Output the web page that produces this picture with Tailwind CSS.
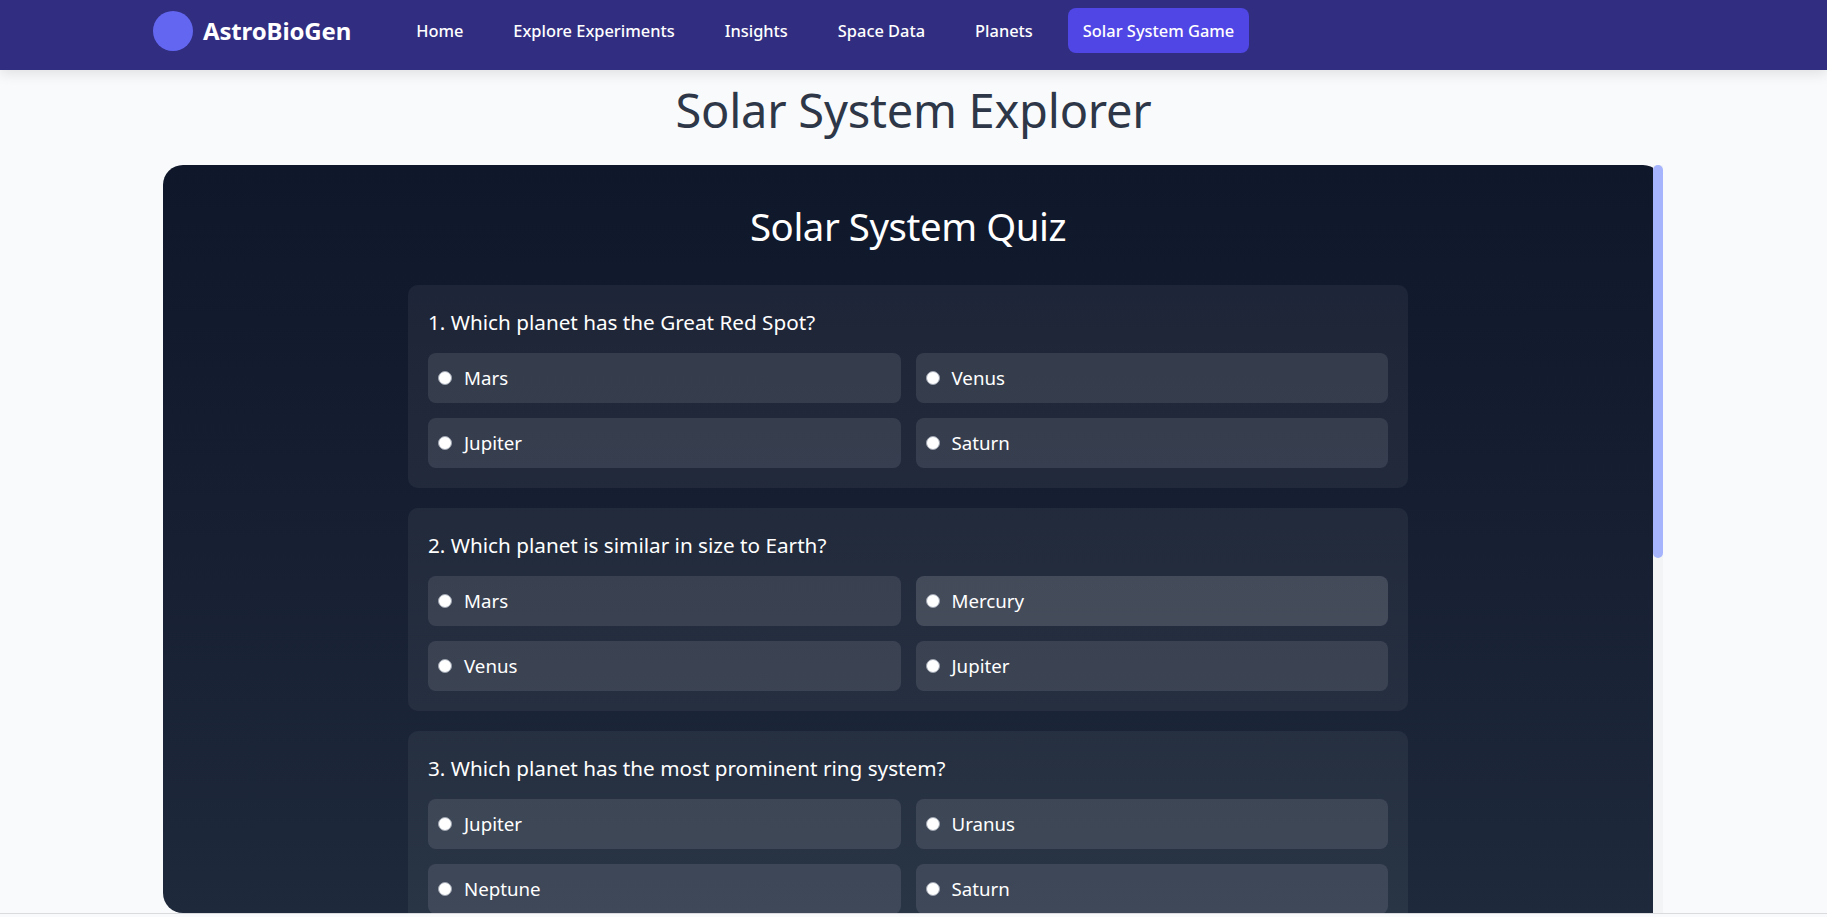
<!doctype html>
<html lang="en">
<head>
<meta charset="utf-8">
<title>Solar System Explorer</title>
<script src="https://cdn.jsdelivr.net/npm/@tailwindcss/browser@4"></script>
</head>
<body class="h-[917px] overflow-hidden bg-[#f9fafb] font-['Noto_Sans',sans-serif]">
<nav class="relative z-10 h-[70px] bg-[#312e81] shadow-[0_4px_12px_rgba(0,0,0,0.1)] pl-[153px] pb-[9px] flex items-center">
  <div class="flex items-center gap-[10px] text-white">
    <span class="w-10 h-10 rounded-full bg-[#6366f1]"></span>
    <span class="text-2xl font-bold tracking-[-0.15px]">AstroBioGen</span>
  </div>
  <ul class="flex items-center gap-5 ml-[50px] text-white text-[16.4px] font-medium">
    <li><a class="block px-[15px] py-[10px] leading-[25px] rounded-lg">Home</a></li>
    <li><a class="block px-[15px] py-[10px] leading-[25px] rounded-lg">Explore Experiments</a></li>
    <li><a class="block px-[15px] py-[10px] leading-[25px] rounded-lg">Insights</a></li>
    <li><a class="block px-[15px] py-[10px] leading-[25px] rounded-lg">Space Data</a></li>
    <li><a class="block px-[15px] py-[10px] leading-[25px] rounded-lg">Planets</a></li>
    <li><a class="block px-[15px] py-[10px] leading-[25px] rounded-lg bg-[#4f46e5]">Solar System Game</a></li>
  </ul>
</nav>
<main class="h-[844px] border-b border-[#d9dbde] flex flex-col items-center">
  <h1 class="h-[95px] pb-[14px] flex items-center justify-center text-[47px] tracking-[-0.24px] text-[#2d3748]">Solar System Explorer</h1>
  <div class="relative w-[1500px] mr-[1px] h-[748px]">
    <section class="h-full overflow-hidden rounded-[20px] rounded-br-none bg-linear-to-b from-[#0f172a] to-[#1e293b] pr-[10px] text-white flex flex-col items-center">
      <h2 class="h-[120px] shrink-0 pt-[4px] flex items-center justify-center text-[38.4px] tracking-[-0.45px]">Solar System Quiz</h2>
      <div class="w-[1000px] flex flex-col gap-5">
        <article class="rounded-[10px] bg-white/5 p-5">
          <h3 class="text-[20.7px] mb-[15px] h-[33px] leading-[35px]">1. Which planet has the Great Red Spot?</h3>
          <div class="grid grid-cols-2 gap-[15px] text-[18.7px]">
            <label class="h-[50px] rounded-lg bg-white/10 px-[10px] flex items-center gap-[12px]"><input type="radio" name="q1" class="w-[14px] h-[14px] -mt-[1px] appearance-none rounded-full bg-white border border-[#9ca3af]">Mars</label>
            <label class="h-[50px] rounded-lg bg-white/10 px-[10px] flex items-center gap-[12px]"><input type="radio" name="q1" class="w-[14px] h-[14px] -mt-[1px] appearance-none rounded-full bg-white border border-[#9ca3af]">Venus</label>
            <label class="h-[50px] rounded-lg bg-white/10 px-[10px] flex items-center gap-[12px]"><input type="radio" name="q1" class="w-[14px] h-[14px] -mt-[1px] appearance-none rounded-full bg-white border border-[#9ca3af]">Jupiter</label>
            <label class="h-[50px] rounded-lg bg-white/10 px-[10px] flex items-center gap-[12px]"><input type="radio" name="q1" class="w-[14px] h-[14px] -mt-[1px] appearance-none rounded-full bg-white border border-[#9ca3af]">Saturn</label>
          </div>
        </article>
        <article class="rounded-[10px] bg-white/5 p-5">
          <h3 class="text-[20.7px] mb-[15px] h-[33px] leading-[35px]">2. Which planet is similar in size to Earth?</h3>
          <div class="grid grid-cols-2 gap-[15px] text-[18.7px]">
            <label class="h-[50px] rounded-lg bg-white/10 px-[10px] flex items-center gap-[12px]"><input type="radio" name="q2" class="w-[14px] h-[14px] -mt-[1px] appearance-none rounded-full bg-white border border-[#9ca3af]">Mars</label>
            <label class="h-[50px] rounded-lg bg-white/15 px-[10px] flex items-center gap-[12px]"><input type="radio" name="q2" class="w-[14px] h-[14px] -mt-[1px] appearance-none rounded-full bg-white border border-[#9ca3af]">Mercury</label>
            <label class="h-[50px] rounded-lg bg-white/10 px-[10px] flex items-center gap-[12px]"><input type="radio" name="q2" class="w-[14px] h-[14px] -mt-[1px] appearance-none rounded-full bg-white border border-[#9ca3af]">Venus</label>
            <label class="h-[50px] rounded-lg bg-white/10 px-[10px] flex items-center gap-[12px]"><input type="radio" name="q2" class="w-[14px] h-[14px] -mt-[1px] appearance-none rounded-full bg-white border border-[#9ca3af]">Jupiter</label>
          </div>
        </article>
        <article class="rounded-[10px] bg-white/5 p-5">
          <h3 class="text-[20.7px] mb-[15px] h-[33px] leading-[35px]">3. Which planet has the most prominent ring system?</h3>
          <div class="grid grid-cols-2 gap-[15px] text-[18.7px]">
            <label class="h-[50px] rounded-lg bg-white/10 px-[10px] flex items-center gap-[12px]"><input type="radio" name="q3" class="w-[14px] h-[14px] -mt-[1px] appearance-none rounded-full bg-white border border-[#9ca3af]">Jupiter</label>
            <label class="h-[50px] rounded-lg bg-white/10 px-[10px] flex items-center gap-[12px]"><input type="radio" name="q3" class="w-[14px] h-[14px] -mt-[1px] appearance-none rounded-full bg-white border border-[#9ca3af]">Uranus</label>
            <label class="h-[50px] rounded-lg bg-white/10 px-[10px] flex items-center gap-[12px]"><input type="radio" name="q3" class="w-[14px] h-[14px] -mt-[1px] appearance-none rounded-full bg-white border border-[#9ca3af]">Neptune</label>
            <label class="h-[50px] rounded-lg bg-white/10 px-[10px] flex items-center gap-[12px]"><input type="radio" name="q3" class="w-[14px] h-[14px] -mt-[1px] appearance-none rounded-full bg-white border border-[#9ca3af]">Saturn</label>
          </div>
        </article>
      </div>
    </section>
    <div class="absolute top-0 right-0 bottom-0 w-[10px] bg-[#f3f4f6]">
      <div class="h-[393px] rounded-[5px] bg-[#a5b4fc]"></div>
    </div>
  </div>
</main>
</body>
</html>
